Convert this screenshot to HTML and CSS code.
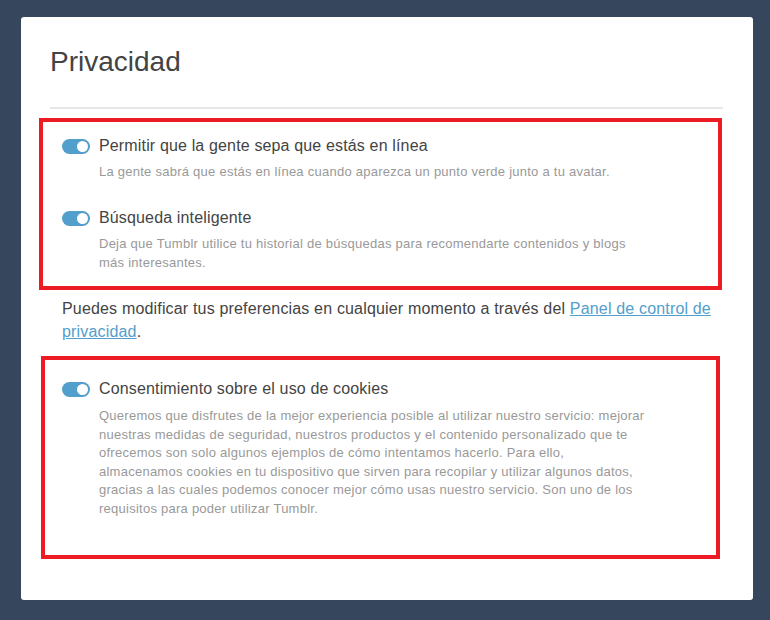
FILE: index.html
```html
<!DOCTYPE html>
<html lang="es">
<head>
<meta charset="utf-8">
<title>Privacidad</title>
<link rel="stylesheet" href="styles.css">
</head>
<body>
<main class="card">
  <header class="card-header">
    <h1 class="card-title">Privacidad</h1>
  </header>

  <section class="mark mark-first">
    <div class="setting">
      <div class="setting-head">
        <span class="toggle"><span class="knob"></span></span>
        <span class="setting-title">Permitir que la gente sepa que estás en línea</span>
      </div>
      <p class="setting-desc">La gente sabrá que estás en línea cuando aparezca un punto verde junto a tu avatar.</p>
    </div>
    <div class="setting">
      <div class="setting-head">
        <span class="toggle"><span class="knob"></span></span>
        <span class="setting-title">Búsqueda inteligente</span>
      </div>
      <p class="setting-desc">Deja que Tumblr utilice tu historial de búsquedas para recomendarte contenidos y blogs más interesantes.</p>
    </div>
  </section>

  <p class="note">Puedes modificar tus preferencias en cualquier momento a través del <a href="#" class="link">Panel de control de privacidad</a>.</p>

  <section class="mark mark-second">
    <div class="setting">
      <div class="setting-head">
        <span class="toggle"><span class="knob"></span></span>
        <span class="setting-title">Consentimiento sobre el uso de cookies</span>
      </div>
      <p class="setting-desc setting-desc-long">Queremos que disfrutes de la mejor experiencia posible al utilizar nuestro servicio: mejorar nuestras medidas de seguridad, nuestros productos y el contenido personalizado que te ofrecemos son solo algunos ejemplos de cómo intentamos hacerlo. Para ello, almacenamos cookies en tu dispositivo que sirven para recopilar y utilizar algunos datos, gracias a las cuales podemos conocer mejor cómo usas nuestro servicio. Son uno de los requisitos para poder utilizar Tumblr.</p>
    </div>
  </section>
</main>
</body>
</html>
```

FILE: styles.css
```css
* {
  box-sizing: border-box;
}

html,
body {
  margin: 0;
  height: 100%;
}

body {
  background: #36465d;
  padding: 17px 17px 0 21px;
  font-family: "Liberation Sans", Arial, sans-serif;
  color: #444444;
}

.card {
  background: #ffffff;
  border-radius: 3px;
  padding: 28px 30px 41px 29px;
  display: flex;
  flex-direction: column;
}

.card-header {
  padding-bottom: 28px;
  border-bottom: 2px solid #e7e7e7;
}

.card-title {
  margin: 0;
  font-size: 28px;
  line-height: 34px;
  font-weight: normal;
  color: #444444;
}

.mark {
  border: 4px solid #ed1c24;
}

.mark-first {
  margin: 9px 1px 0 -11px;
  padding: 14px 19px 14px 19px;
  display: flex;
  flex-direction: column;
  gap: 27px;
}

.mark-second {
  margin: 13px 3px 0 -9px;
  padding: 19px 17px 36px 17px;
}

.setting {
  display: flex;
  flex-direction: column;
  gap: 6px;
}

.setting-head {
  display: flex;
  align-items: center;
  gap: 9px;
}

.toggle {
  width: 28px;
  height: 15px;
  border-radius: 8px;
  background: #529ecc;
  display: flex;
  align-items: center;
  justify-content: flex-end;
  padding-right: 2px;
  flex: none;
}

.knob {
  width: 11px;
  height: 11px;
  border-radius: 50%;
  background: #ffffff;
}

.setting-title {
  font-size: 16px;
  line-height: 20px;
  letter-spacing: 0.15px;
  color: #444444;
}

.setting-desc {
  margin: 0 0 0 37px;
  max-width: 548px;
  font-size: 13px;
  line-height: 19px;
  letter-spacing: 0.25px;
  color: #999999;
}

.setting-desc-long {
  line-height: 18.6px;
  margin-top: 2px;
}

.note {
  margin: 7px 0 0 12px;
  font-size: 16px;
  line-height: 23px;
  letter-spacing: 0.17px;
  color: #444444;
}

.link {
  color: #529ecc;
  text-decoration: underline;
}
```
